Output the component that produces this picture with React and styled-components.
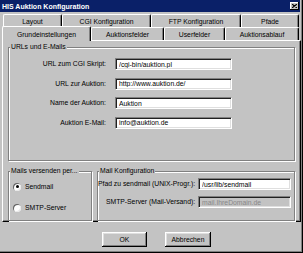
import React from 'react';
import styled, { createGlobalStyle } from 'styled-components';

const GlobalStyle = createGlobalStyle`
  html, body {
    margin: 0;
    padding: 0;
    background: #c3c3c3;
  }
  body {
    font-family: 'Liberation Sans', Arial, sans-serif;
    font-size: 6.8px;
    color: #000;
  }
  * {
    box-sizing: border-box;
  }
`;

const Window = styled.div`
  width: 303px;
  height: 253px;
  background: #c3c3c3;
  border-right: 1px solid #000;
  border-bottom: 1px solid #000;
  box-shadow: inset -1px -1px 0 #808080;
  padding-right: 1px;
  display: flex;
  flex-direction: column;
`;

const TitleBar = styled.div`
  height: 12px;
  margin-right: 1px;
  padding: 0 1px 0 2px;
  background: #0a2068;
  display: flex;
  align-items: center;
`;

const Title = styled.span`
  color: #fff;
  font-weight: bold;
  font-size: 7px;
  white-space: nowrap;
`;

const CloseButton = styled.div`
  margin-left: auto;
  width: 9px;
  height: 8px;
  background: #c3c3c3;
  box-shadow: inset -1px -1px 0 #000, inset 1px 1px 0 #fff;
  display: flex;
  align-items: center;
  justify-content: center;
`;

const TabStrip = styled.div`
  margin-top: 2px;
  display: flex;
  flex-direction: column;
`;

const TabRow = styled.div`
  display: flex;
  padding-left: ${(p) => p.$indent}px;
`;

const Tab = styled.div`
  width: ${(p) => p.$w}px;
  height: ${(p) => (p.$selected ? 15 : 13)}px;
  margin: ${(p) => (p.$selected ? '-1px 0 -1px 0' : '0')};
  position: relative;
  z-index: ${(p) => (p.$selected ? 1 : 0)};
  background: #c3c3c3;
  border-top: 1px solid #fff;
  border-left: 1px solid #fff;
  border-right: 1px solid #000;
  box-shadow: inset -1px 0 0 #808080;
  border-radius: 2px 2px 0 0;
  display: flex;
  align-items: center;
  justify-content: center;
  white-space: nowrap;
`;

const Panel = styled.div`
  margin-left: 2px;
  width: 299px;
  height: 182px;
  border-top: 1px solid #fff;
  border-left: 1px solid #fff;
  border-right: 1px solid #000;
  border-bottom: 1px solid #000;
  box-shadow: inset -1px -1px 0 #808080;
  padding: 2px 5px 0 5px;
  display: flex;
  flex-direction: column;
`;

const Group = styled.fieldset`
  margin: 0;
  min-width: 0;
  padding: ${(p) => p.$pad};
  border: 1px solid #808080;
  box-shadow: inset 1px 1px 0 #fff, 1px 1px 0 #fff;
  width: ${(p) => (p.$w ? `${p.$w}px` : 'auto')};
  flex: ${(p) => (p.$w ? 'none' : '1')};
`;

const Legend = styled.legend`
  padding: 0 1px;
  margin-left: 1px;
  line-height: 8px;
  font-size: 6.8px;
  background: #c3c3c3;
  white-space: nowrap;
`;

const FormGrid = styled.div`
  display: grid;
  grid-template-columns: ${(p) => p.$cols};
  column-gap: ${(p) => p.$gap}px;
  row-gap: ${(p) => p.$rowGap}px;
  align-items: center;
`;

const Label = styled.span`
  justify-self: end;
  white-space: nowrap;
  line-height: 12px;
`;

const Field = styled.input`
  width: 100%;
  height: 12px;
  margin: 0;
  padding: 0 0 0 3px;
  font: inherit;
  font-size: 6.8px;
  background: ${(p) => (p.disabled ? '#c3c3c3' : '#fff')};
  color: ${(p) => (p.disabled ? '#888' : '#000')};
  border-top: 1px solid #808080;
  border-left: 1px solid #808080;
  border-right: 1px solid #fff;
  border-bottom: 1px solid #fff;
  box-shadow: inset 1px 1px 0 #202020, inset -1px -1px 0 #dfdfdf;
  outline: none;
  &:disabled {
    -webkit-text-fill-color: #888;
    opacity: 1;
  }
`;

const BottomRow = styled.div`
  margin-top: 6px;
  display: flex;
  gap: 5px;
`;

const RadioList = styled.div`
  display: flex;
  flex-direction: column;
  gap: 10px;
  padding-left: 4px;
`;

const RadioRow = styled.label`
  display: flex;
  align-items: center;
  gap: 4px;
  height: 11px;
`;

const RadioDot = styled.span`
  width: 8px;
  height: 8px;
  border-radius: 50%;
  background: #fff;
  box-shadow: inset 1px 1px 0 #606060, inset -1px -1px 0 #e8e8e8;
  display: flex;
  align-items: center;
  justify-content: center;
  &::after {
    content: '';
    width: 3px;
    height: 3px;
    border-radius: 50%;
    background: ${(p) => (p.$checked ? '#000' : 'transparent')};
  }
`;

const ButtonRow = styled.div`
  margin-top: 10px;
  padding-left: 12px;
  display: flex;
  justify-content: center;
  gap: 18px;
`;

const Button = styled.button`
  width: ${(p) => p.$w}px;
  height: 15px;
  margin: 0;
  padding: 0;
  border: none;
  background: #c3c3c3;
  font: inherit;
  font-size: 6.8px;
  color: #000;
  box-shadow: inset -1px -1px 0 #000, inset 1px 1px 0 #fff,
    inset -2px -2px 0 #808080, inset 2px 2px 0 #dfdfdf;
`;

const backTabs = [
  ['Layout', 59],
  ['CGI Konfiguration', 89],
  ['FTP Konfiguration', 90],
  ['Pfade', 58],
];

const frontTabs = [
  ['Grundeinstellungen', 89],
  ['Auktionsfelder', 73],
  ['Userfelder', 61],
  ['Auktionsablauf', 74],
];

const urlFields = [
  ['URL zum CGI Skript:', '/cgi-bin/auktion.pl'],
  ['URL zur Auktion:', 'http://www.auktion.de/'],
  ['Name der Auktion:', 'Auktion'],
  ['Auktion E-Mail:', 'info@auktion.de'],
];

export default function App() {
  return (
    <>
      <GlobalStyle />
      <Window>
        <TitleBar>
          <Title>HIS Auktion Konfiguration</Title>
          <CloseButton>
            <svg width="5" height="4" viewBox="0 0 5 4">
              <path d="M0 0 L5 4 M5 0 L0 4" stroke="#000" strokeWidth="1.1" />
            </svg>
          </CloseButton>
        </TitleBar>

        <TabStrip>
          <TabRow $indent={3}>
            {backTabs.map(([name, w]) => (
              <Tab key={name} $w={w}>{name}</Tab>
            ))}
          </TabRow>
          <TabRow $indent={2}>
            {frontTabs.map(([name, w], i) => (
              <Tab key={name} $w={w} $selected={i === 0}>{name}</Tab>
            ))}
          </TabRow>
        </TabStrip>

        <Panel>
          <Group $pad="7px 0 7px 0">
            <Legend>URLs und E-Mails</Legend>
            <FormGrid $cols="97px 117px" $gap={9} $rowGap={7.5}>
              {urlFields.map(([label, value]) => (
                <React.Fragment key={label}>
                  <Label>{label}</Label>
                  <Field readOnly value={value} />
                </React.Fragment>
              ))}
            </FormGrid>
          </Group>

          <BottomRow>
            <Group $w={84} $pad="6px 0 7px 0">
              <Legend>Mails versenden per...</Legend>
              <RadioList>
                <RadioRow><RadioDot $checked />Sendmail</RadioRow>
                <RadioRow><RadioDot />SMTP-Server</RadioRow>
              </RadioList>
            </Group>
            <Group $pad="3px 4px 12px 0">
              <Legend>Mail Konfiguration</Legend>
              <FormGrid $cols="1fr 93px" $gap={3} $rowGap={6}>
                <Label>Pfad zu sendmail (UNIX-Progr.):</Label>
                <Field readOnly value="/usr/lib/sendmail" />
                <Label>SMTP-Server (Mail-Versand):</Label>
                <Field disabled value="mail.IhreDomain.de" />
              </FormGrid>
            </Group>
          </BottomRow>
        </Panel>

        <ButtonRow>
          <Button $w={45}>OK</Button>
          <Button $w={46}>Abbrechen</Button>
        </ButtonRow>
      </Window>
    </>
  );
}
